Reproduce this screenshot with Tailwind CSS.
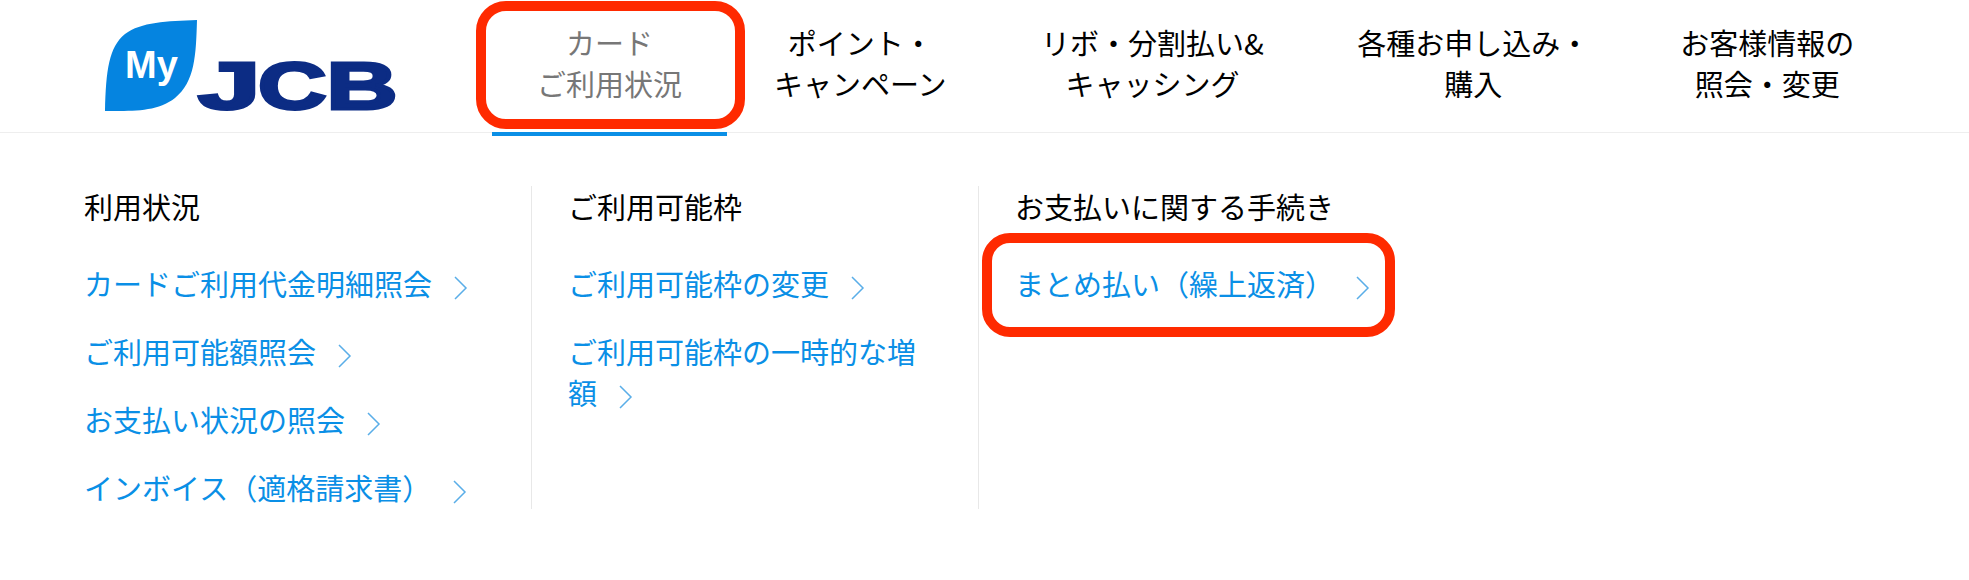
<!DOCTYPE html>
<html lang="ja">
<head>
    <meta charset="UTF-8">
    <meta name="viewport" content="width=device-width, initial-scale=1.0">
    <title>MyJCB</title>
    <script src="https://cdn.jsdelivr.net/npm/@tailwindcss/browser@4"></script>
</head>
<body class="bg-white font-['Noto_Sans_CJK_JP','Noto_Sans',sans-serif] text-[29px] leading-[41px] text-black">
    <div class="relative h-[580px] w-[1969px] overflow-hidden">
        <!-- header -->
        <header class="flex h-[133px] items-start border-b border-[#eeeeee]">
            <a class="ml-[105px] mt-[20px] block shrink-0">
                <svg class="overflow-visible" width="292" height="92" viewBox="0 0 292 92">
                    <path d="M92 0C62 1 36 2 20 14C4 27 1 50 0 91C28 91 52 92 70 78C90 62 91 35 92 0Z" fill="#0584e0"/>
                    <text x="20" y="58" fill="#ffffff" font-family="Liberation Sans" font-weight="700" font-size="38">My</text>
                    <g fill="#0c2c84" stroke="#0c2c84" stroke-width="3" font-family="Liberation Sans" font-weight="700" font-size="66">
                        <text transform="translate(93 88.5) scale(1.7 1)">J</text>
                        <text transform="translate(153 88.5) scale(1.44 1)">C</text>
                        <text transform="translate(221.4 88.5) scale(1.49 1)">B</text>
                    </g>
                </svg>
            </a>
            <nav class="ml-[95px] flex text-center">
                <a class="flex h-[136px] flex-col justify-center border-b-4 border-[#0a8fe6] px-[45px] pb-[6px] text-[#777777]">カード<br>ご利用状況</a>
                <a class="flex h-[136px] flex-col justify-center border-b-4 border-transparent px-[47px] pb-[6px]">ポイント・<br>キャンペーン</a>
                <a class="flex h-[136px] flex-col justify-center border-b-4 border-transparent px-[47.5px] pb-[6px]">リボ・分割払い&amp;<br>キャッシング</a>
                <a class="flex h-[136px] flex-col justify-center border-b-4 border-transparent px-[46px] pb-[6px]">各種お申し込み・<br>購入</a>
                <a class="flex h-[136px] flex-col justify-center border-b-4 border-transparent px-[45px] pb-[6px]">お客様情報の<br>照会・変更</a>
            </nav>
        </header>

        <!-- dropdown columns -->
        <main class="ml-[84px] mt-[53px] flex text-[#0a8fe6]">
            <section class="h-[323px] w-[448px] border-r border-[#e8e8e8]">
                <h2 class="mb-[36px] font-normal text-black">利用状況</h2>
                <ul class="flex flex-col gap-[27px]">
                    <li>カードご利用代金明細照会<svg class="ml-[21px] inline-block align-[-5px]" width="16" height="26" viewBox="0 0 16 26"><path d="M2 2L13 13L2 24" fill="none" stroke="#5aaee8" stroke-width="1.5"/></svg></li>
                    <li>ご利用可能額照会<svg class="ml-[21px] inline-block align-[-5px]" width="16" height="26" viewBox="0 0 16 26"><path d="M2 2L13 13L2 24" fill="none" stroke="#5aaee8" stroke-width="1.5"/></svg></li>
                    <li>お支払い状況の照会<svg class="ml-[21px] inline-block align-[-5px]" width="16" height="26" viewBox="0 0 16 26"><path d="M2 2L13 13L2 24" fill="none" stroke="#5aaee8" stroke-width="1.5"/></svg></li>
                    <li>インボイス（適格請求書）<svg class="ml-[21px] inline-block align-[-5px]" width="16" height="26" viewBox="0 0 16 26"><path d="M2 2L13 13L2 24" fill="none" stroke="#5aaee8" stroke-width="1.5"/></svg></li>
                </ul>
            </section>
            <section class="h-[323px] w-[447px] border-r border-[#e8e8e8] pl-[36px] pr-[40px]">
                <h2 class="mb-[36px] font-normal text-black">ご利用可能枠</h2>
                <ul class="flex flex-col gap-[27px]">
                    <li>ご利用可能枠の変更<svg class="ml-[21px] inline-block align-[-5px]" width="16" height="26" viewBox="0 0 16 26"><path d="M2 2L13 13L2 24" fill="none" stroke="#5aaee8" stroke-width="1.5"/></svg></li>
                    <li>ご利用可能枠の一時的な増額<svg class="ml-[21px] inline-block align-[-5px]" width="16" height="26" viewBox="0 0 16 26"><path d="M2 2L13 13L2 24" fill="none" stroke="#5aaee8" stroke-width="1.5"/></svg></li>
                </ul>
            </section>
            <section class="h-[323px] w-[447px] pl-[36px]">
                <h2 class="mb-[36px] font-normal text-black">お支払いに関する手続き</h2>
                <ul class="flex flex-col gap-[27px]">
                    <li>まとめ払い（繰上返済）<svg class="ml-[21px] inline-block align-[-5px]" width="16" height="26" viewBox="0 0 16 26"><path d="M2 2L13 13L2 24" fill="none" stroke="#5aaee8" stroke-width="1.5"/></svg></li>
                </ul>
            </section>
        </main>

        <!-- red annotation boxes -->
        <div class="absolute left-[476px] top-[1px] h-[128px] w-[269px] rounded-[30px] border-[10px] border-[#ff2a00]"></div>
        <div class="absolute left-[982px] top-[233px] h-[104px] w-[413px] rounded-[28px] border-[10px] border-[#ff2a00]"></div>
    </div>
</body>
</html>
